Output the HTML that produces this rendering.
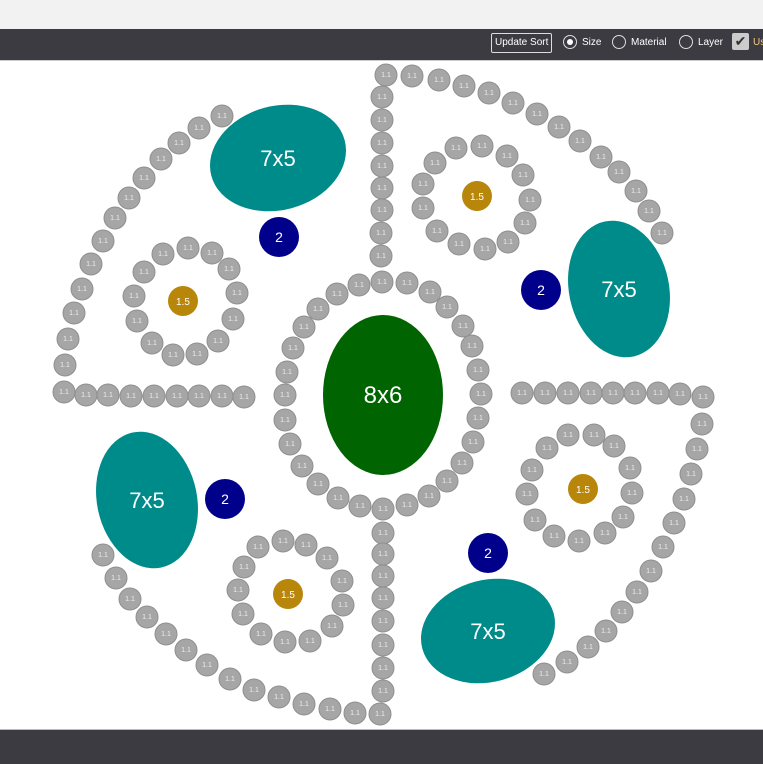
<!DOCTYPE html>
<html><head><meta charset="utf-8"><style>
body{margin:0;width:763px;height:763px;overflow:hidden;background:#fff;font-family:"Liberation Sans",sans-serif}
.top{position:absolute;left:0;top:0;width:763px;height:29px;background:#f2f2f2}
.bar{position:absolute;left:0;top:29px;width:763px;height:31px;background:#3c3b41;border-bottom:1px solid #ccc;color:#fff;font-size:10px}
.bot{position:absolute;left:0;top:729px;width:763px;height:34px;background:#3c3b41;border-top:1px solid #bbb}
.btn{position:absolute;left:491px;top:4px;height:18px;padding:0 3px;border:1px solid #ddd;border-radius:2px;line-height:18px;font-size:10px}
.rad{position:absolute;top:6px;width:12px;height:12px;border:1px solid #ddd;border-radius:50%}
.lb{position:absolute;top:8px;font-size:10px}
svg{position:absolute;left:0;top:0}
.s{fill:#a6a6a6;stroke:#8f8f8f;stroke-width:1}
.t{fill:#eee;font-size:7px;text-anchor:middle;font-family:"Liberation Sans",sans-serif}
</style></head><body>
<div class="top"></div>
<div class="bar">
<div class="btn">Update Sort</div>
<div class="rad" style="left:563px"><div style="position:absolute;left:3px;top:3px;width:6px;height:6px;border-radius:50%;background:#fff"></div></div><div class="lb" style="left:582px">Size</div>
<div class="rad" style="left:612px"></div><div class="lb" style="left:631px">Material</div>
<div class="rad" style="left:679px"></div><div class="lb" style="left:698px">Layer</div>
<div style="position:absolute;left:732px;top:4px;width:17px;height:17px;background:#ccc;border-radius:2px;color:#333;font-size:14px;line-height:17px;text-align:center">✔</div><div class="lb" style="left:753px;color:#f5c97a">Us</div>
</div>
<div class="bot"></div>
<svg width="763" height="763" viewBox="0 0 763 763" id="g">
<ellipse cx="278" cy="158" rx="69" ry="52" transform="rotate(-15 278 158)" fill="#008b8b"/>
<text x="278" y="166" fill="#fff" font-size="22" text-anchor="middle">7x5</text>
<ellipse cx="619" cy="289" rx="50" ry="69" transform="rotate(-12 619 289)" fill="#008b8b"/>
<text x="619" y="297" fill="#fff" font-size="22" text-anchor="middle">7x5</text>
<ellipse cx="147" cy="500" rx="50" ry="69" transform="rotate(-12 147 500)" fill="#008b8b"/>
<text x="147" y="508" fill="#fff" font-size="22" text-anchor="middle">7x5</text>
<ellipse cx="488" cy="631" rx="68" ry="51" transform="rotate(-15 488 631)" fill="#008b8b"/>
<text x="488" y="639" fill="#fff" font-size="22" text-anchor="middle">7x5</text>
<ellipse cx="383" cy="395" rx="60" ry="80" fill="#006400"/>
<text x="383" y="403" fill="#fff" font-size="24" text-anchor="middle">8x6</text>
<circle cx="279" cy="237" r="20" fill="#00008b"/><text x="279" y="242" fill="#fff" font-size="14" text-anchor="middle">2</text>
<circle cx="541" cy="290" r="20" fill="#00008b"/><text x="541" y="295" fill="#fff" font-size="14" text-anchor="middle">2</text>
<circle cx="225" cy="499" r="20" fill="#00008b"/><text x="225" y="504" fill="#fff" font-size="14" text-anchor="middle">2</text>
<circle cx="488" cy="553" r="20" fill="#00008b"/><text x="488" y="558" fill="#fff" font-size="14" text-anchor="middle">2</text>
<circle cx="183" cy="301" r="15" fill="#b8860b"/><text x="183" y="305" fill="#fff" font-size="10" text-anchor="middle">1.5</text>
<circle cx="477" cy="196" r="15" fill="#b8860b"/><text x="477" y="200" fill="#fff" font-size="10" text-anchor="middle">1.5</text>
<circle cx="288" cy="594" r="15" fill="#b8860b"/><text x="288" y="598" fill="#fff" font-size="10" text-anchor="middle">1.5</text>
<circle cx="583" cy="489" r="15" fill="#b8860b"/><text x="583" y="493" fill="#fff" font-size="10" text-anchor="middle">1.5</text>
<g>
<circle class="s" cx="222" cy="116" r="11"/><text class="t" x="222" y="118">1.1</text>
<circle class="s" cx="199" cy="128" r="11"/><text class="t" x="199" y="130">1.1</text>
<circle class="s" cx="179" cy="143" r="11"/><text class="t" x="179" y="145">1.1</text>
<circle class="s" cx="161" cy="159" r="11"/><text class="t" x="161" y="161">1.1</text>
<circle class="s" cx="144" cy="178" r="11"/><text class="t" x="144" y="180">1.1</text>
<circle class="s" cx="129" cy="198" r="11"/><text class="t" x="129" y="200">1.1</text>
<circle class="s" cx="115" cy="218" r="11"/><text class="t" x="115" y="220">1.1</text>
<circle class="s" cx="103" cy="241" r="11"/><text class="t" x="103" y="243">1.1</text>
<circle class="s" cx="91" cy="264" r="11"/><text class="t" x="91" y="266">1.1</text>
<circle class="s" cx="82" cy="289" r="11"/><text class="t" x="82" y="291">1.1</text>
<circle class="s" cx="74" cy="313" r="11"/><text class="t" x="74" y="315">1.1</text>
<circle class="s" cx="68" cy="339" r="11"/><text class="t" x="68" y="341">1.1</text>
<circle class="s" cx="65" cy="365" r="11"/><text class="t" x="65" y="367">1.1</text>
<circle class="s" cx="64" cy="392" r="11"/><text class="t" x="64" y="394">1.1</text>
<circle class="s" cx="86" cy="395" r="11"/><text class="t" x="86" y="397">1.1</text>
<circle class="s" cx="108" cy="395" r="11"/><text class="t" x="108" y="397">1.1</text>
<circle class="s" cx="131" cy="396" r="11"/><text class="t" x="131" y="398">1.1</text>
<circle class="s" cx="154" cy="396" r="11"/><text class="t" x="154" y="398">1.1</text>
<circle class="s" cx="177" cy="396" r="11"/><text class="t" x="177" y="398">1.1</text>
<circle class="s" cx="199" cy="396" r="11"/><text class="t" x="199" y="398">1.1</text>
<circle class="s" cx="222" cy="396" r="11"/><text class="t" x="222" y="398">1.1</text>
<circle class="s" cx="244" cy="397" r="11"/><text class="t" x="244" y="399">1.1</text>

<circle class="s" cx="163" cy="254" r="11"/><text class="t" x="163" y="256">1.1</text>
<circle class="s" cx="188" cy="248" r="11"/><text class="t" x="188" y="250">1.1</text>
<circle class="s" cx="212" cy="253" r="11"/><text class="t" x="212" y="255">1.1</text>
<circle class="s" cx="229" cy="269" r="11"/><text class="t" x="229" y="271">1.1</text>
<circle class="s" cx="237" cy="293" r="11"/><text class="t" x="237" y="295">1.1</text>
<circle class="s" cx="233" cy="319" r="11"/><text class="t" x="233" y="321">1.1</text>
<circle class="s" cx="218" cy="341" r="11"/><text class="t" x="218" y="343">1.1</text>
<circle class="s" cx="197" cy="354" r="11"/><text class="t" x="197" y="356">1.1</text>
<circle class="s" cx="173" cy="355" r="11"/><text class="t" x="173" y="357">1.1</text>
<circle class="s" cx="152" cy="343" r="11"/><text class="t" x="152" y="345">1.1</text>
<circle class="s" cx="137" cy="321" r="11"/><text class="t" x="137" y="323">1.1</text>
<circle class="s" cx="134" cy="296" r="11"/><text class="t" x="134" y="298">1.1</text>
<circle class="s" cx="144" cy="272" r="11"/><text class="t" x="144" y="274">1.1</text>

<circle class="s" cx="386" cy="75" r="11"/><text class="t" x="386" y="77">1.1</text>
<circle class="s" cx="382" cy="97" r="11"/><text class="t" x="382" y="99">1.1</text>
<circle class="s" cx="382" cy="120" r="11"/><text class="t" x="382" y="122">1.1</text>
<circle class="s" cx="382" cy="143" r="11"/><text class="t" x="382" y="145">1.1</text>
<circle class="s" cx="382" cy="166" r="11"/><text class="t" x="382" y="168">1.1</text>
<circle class="s" cx="382" cy="188" r="11"/><text class="t" x="382" y="190">1.1</text>
<circle class="s" cx="382" cy="210" r="11"/><text class="t" x="382" y="212">1.1</text>
<circle class="s" cx="381" cy="233" r="11"/><text class="t" x="381" y="235">1.1</text>
<circle class="s" cx="381" cy="256" r="11"/><text class="t" x="381" y="258">1.1</text>
<circle class="s" cx="412" cy="76" r="11"/><text class="t" x="412" y="78">1.1</text>
<circle class="s" cx="439" cy="80" r="11"/><text class="t" x="439" y="82">1.1</text>
<circle class="s" cx="464" cy="86" r="11"/><text class="t" x="464" y="88">1.1</text>
<circle class="s" cx="489" cy="93" r="11"/><text class="t" x="489" y="95">1.1</text>
<circle class="s" cx="513" cy="103" r="11"/><text class="t" x="513" y="105">1.1</text>
<circle class="s" cx="537" cy="114" r="11"/><text class="t" x="537" y="116">1.1</text>
<circle class="s" cx="559" cy="127" r="11"/><text class="t" x="559" y="129">1.1</text>
<circle class="s" cx="580" cy="141" r="11"/><text class="t" x="580" y="143">1.1</text>
<circle class="s" cx="601" cy="157" r="11"/><text class="t" x="601" y="159">1.1</text>
<circle class="s" cx="619" cy="172" r="11"/><text class="t" x="619" y="174">1.1</text>
<circle class="s" cx="636" cy="191" r="11"/><text class="t" x="636" y="193">1.1</text>
<circle class="s" cx="649" cy="211" r="11"/><text class="t" x="649" y="213">1.1</text>
<circle class="s" cx="662" cy="233" r="11"/><text class="t" x="662" y="235">1.1</text>

<circle class="s" cx="456" cy="148" r="11"/><text class="t" x="456" y="150">1.1</text>
<circle class="s" cx="482" cy="146" r="11"/><text class="t" x="482" y="148">1.1</text>
<circle class="s" cx="507" cy="156" r="11"/><text class="t" x="507" y="158">1.1</text>
<circle class="s" cx="523" cy="175" r="11"/><text class="t" x="523" y="177">1.1</text>
<circle class="s" cx="530" cy="200" r="11"/><text class="t" x="530" y="202">1.1</text>
<circle class="s" cx="525" cy="223" r="11"/><text class="t" x="525" y="225">1.1</text>
<circle class="s" cx="508" cy="242" r="11"/><text class="t" x="508" y="244">1.1</text>
<circle class="s" cx="485" cy="249" r="11"/><text class="t" x="485" y="251">1.1</text>
<circle class="s" cx="459" cy="244" r="11"/><text class="t" x="459" y="246">1.1</text>
<circle class="s" cx="437" cy="231" r="11"/><text class="t" x="437" y="233">1.1</text>
<circle class="s" cx="423" cy="208" r="11"/><text class="t" x="423" y="210">1.1</text>
<circle class="s" cx="423" cy="184" r="11"/><text class="t" x="423" y="186">1.1</text>
<circle class="s" cx="435" cy="163" r="11"/><text class="t" x="435" y="165">1.1</text>

<circle class="s" cx="382" cy="282" r="11"/><text class="t" x="382" y="284">1.1</text>
<circle class="s" cx="407" cy="283" r="11"/><text class="t" x="407" y="285">1.1</text>
<circle class="s" cx="430" cy="292" r="11"/><text class="t" x="430" y="294">1.1</text>
<circle class="s" cx="447" cy="307" r="11"/><text class="t" x="447" y="309">1.1</text>
<circle class="s" cx="463" cy="326" r="11"/><text class="t" x="463" y="328">1.1</text>
<circle class="s" cx="472" cy="346" r="11"/><text class="t" x="472" y="348">1.1</text>
<circle class="s" cx="478" cy="370" r="11"/><text class="t" x="478" y="372">1.1</text>
<circle class="s" cx="481" cy="394" r="11"/><text class="t" x="481" y="396">1.1</text>
<circle class="s" cx="478" cy="418" r="11"/><text class="t" x="478" y="420">1.1</text>
<circle class="s" cx="473" cy="442" r="11"/><text class="t" x="473" y="444">1.1</text>
<circle class="s" cx="462" cy="463" r="11"/><text class="t" x="462" y="465">1.1</text>
<circle class="s" cx="447" cy="481" r="11"/><text class="t" x="447" y="483">1.1</text>
<circle class="s" cx="429" cy="496" r="11"/><text class="t" x="429" y="498">1.1</text>
<circle class="s" cx="407" cy="505" r="11"/><text class="t" x="407" y="507">1.1</text>
<circle class="s" cx="383" cy="509" r="11"/><text class="t" x="383" y="511">1.1</text>
<circle class="s" cx="360" cy="506" r="11"/><text class="t" x="360" y="508">1.1</text>
<circle class="s" cx="338" cy="498" r="11"/><text class="t" x="338" y="500">1.1</text>
<circle class="s" cx="318" cy="484" r="11"/><text class="t" x="318" y="486">1.1</text>
<circle class="s" cx="302" cy="466" r="11"/><text class="t" x="302" y="468">1.1</text>
<circle class="s" cx="290" cy="444" r="11"/><text class="t" x="290" y="446">1.1</text>
<circle class="s" cx="285" cy="420" r="11"/><text class="t" x="285" y="422">1.1</text>
<circle class="s" cx="285" cy="395" r="11"/><text class="t" x="285" y="397">1.1</text>
<circle class="s" cx="287" cy="372" r="11"/><text class="t" x="287" y="374">1.1</text>
<circle class="s" cx="293" cy="348" r="11"/><text class="t" x="293" y="350">1.1</text>
<circle class="s" cx="304" cy="327" r="11"/><text class="t" x="304" y="329">1.1</text>
<circle class="s" cx="318" cy="309" r="11"/><text class="t" x="318" y="311">1.1</text>
<circle class="s" cx="337" cy="294" r="11"/><text class="t" x="337" y="296">1.1</text>
<circle class="s" cx="359" cy="285" r="11"/><text class="t" x="359" y="287">1.1</text>

<circle class="s" cx="383" cy="533" r="11"/><text class="t" x="383" y="535">1.1</text>
<circle class="s" cx="383" cy="554" r="11"/><text class="t" x="383" y="556">1.1</text>
<circle class="s" cx="383" cy="576" r="11"/><text class="t" x="383" y="578">1.1</text>
<circle class="s" cx="383" cy="598" r="11"/><text class="t" x="383" y="600">1.1</text>
<circle class="s" cx="383" cy="621" r="11"/><text class="t" x="383" y="623">1.1</text>
<circle class="s" cx="383" cy="645" r="11"/><text class="t" x="383" y="647">1.1</text>
<circle class="s" cx="383" cy="668" r="11"/><text class="t" x="383" y="670">1.1</text>
<circle class="s" cx="383" cy="691" r="11"/><text class="t" x="383" y="693">1.1</text>
<circle class="s" cx="380" cy="714" r="11"/><text class="t" x="380" y="716">1.1</text>
<circle class="s" cx="355" cy="713" r="11"/><text class="t" x="355" y="715">1.1</text>
<circle class="s" cx="330" cy="709" r="11"/><text class="t" x="330" y="711">1.1</text>
<circle class="s" cx="304" cy="704" r="11"/><text class="t" x="304" y="706">1.1</text>
<circle class="s" cx="279" cy="697" r="11"/><text class="t" x="279" y="699">1.1</text>
<circle class="s" cx="254" cy="690" r="11"/><text class="t" x="254" y="692">1.1</text>
<circle class="s" cx="230" cy="679" r="11"/><text class="t" x="230" y="681">1.1</text>
<circle class="s" cx="207" cy="665" r="11"/><text class="t" x="207" y="667">1.1</text>
<circle class="s" cx="186" cy="650" r="11"/><text class="t" x="186" y="652">1.1</text>
<circle class="s" cx="166" cy="634" r="11"/><text class="t" x="166" y="636">1.1</text>
<circle class="s" cx="147" cy="617" r="11"/><text class="t" x="147" y="619">1.1</text>
<circle class="s" cx="130" cy="599" r="11"/><text class="t" x="130" y="601">1.1</text>
<circle class="s" cx="116" cy="578" r="11"/><text class="t" x="116" y="580">1.1</text>
<circle class="s" cx="103" cy="555" r="11"/><text class="t" x="103" y="557">1.1</text>

<circle class="s" cx="258" cy="547" r="11"/><text class="t" x="258" y="549">1.1</text>
<circle class="s" cx="283" cy="541" r="11"/><text class="t" x="283" y="543">1.1</text>
<circle class="s" cx="306" cy="545" r="11"/><text class="t" x="306" y="547">1.1</text>
<circle class="s" cx="327" cy="558" r="11"/><text class="t" x="327" y="560">1.1</text>
<circle class="s" cx="342" cy="581" r="11"/><text class="t" x="342" y="583">1.1</text>
<circle class="s" cx="343" cy="605" r="11"/><text class="t" x="343" y="607">1.1</text>
<circle class="s" cx="332" cy="626" r="11"/><text class="t" x="332" y="628">1.1</text>
<circle class="s" cx="310" cy="641" r="11"/><text class="t" x="310" y="643">1.1</text>
<circle class="s" cx="285" cy="642" r="11"/><text class="t" x="285" y="644">1.1</text>
<circle class="s" cx="261" cy="634" r="11"/><text class="t" x="261" y="636">1.1</text>
<circle class="s" cx="243" cy="614" r="11"/><text class="t" x="243" y="616">1.1</text>
<circle class="s" cx="238" cy="590" r="11"/><text class="t" x="238" y="592">1.1</text>
<circle class="s" cx="244" cy="567" r="11"/><text class="t" x="244" y="569">1.1</text>

<circle class="s" cx="522" cy="393" r="11"/><text class="t" x="522" y="395">1.1</text>
<circle class="s" cx="545" cy="393" r="11"/><text class="t" x="545" y="395">1.1</text>
<circle class="s" cx="568" cy="393" r="11"/><text class="t" x="568" y="395">1.1</text>
<circle class="s" cx="591" cy="393" r="11"/><text class="t" x="591" y="395">1.1</text>
<circle class="s" cx="613" cy="393" r="11"/><text class="t" x="613" y="395">1.1</text>
<circle class="s" cx="635" cy="393" r="11"/><text class="t" x="635" y="395">1.1</text>
<circle class="s" cx="658" cy="393" r="11"/><text class="t" x="658" y="395">1.1</text>
<circle class="s" cx="680" cy="394" r="11"/><text class="t" x="680" y="396">1.1</text>
<circle class="s" cx="703" cy="397" r="11"/><text class="t" x="703" y="399">1.1</text>
<circle class="s" cx="702" cy="424" r="11"/><text class="t" x="702" y="426">1.1</text>
<circle class="s" cx="697" cy="449" r="11"/><text class="t" x="697" y="451">1.1</text>
<circle class="s" cx="691" cy="474" r="11"/><text class="t" x="691" y="476">1.1</text>
<circle class="s" cx="684" cy="499" r="11"/><text class="t" x="684" y="501">1.1</text>
<circle class="s" cx="674" cy="523" r="11"/><text class="t" x="674" y="525">1.1</text>
<circle class="s" cx="663" cy="547" r="11"/><text class="t" x="663" y="549">1.1</text>
<circle class="s" cx="651" cy="571" r="11"/><text class="t" x="651" y="573">1.1</text>
<circle class="s" cx="637" cy="592" r="11"/><text class="t" x="637" y="594">1.1</text>
<circle class="s" cx="622" cy="612" r="11"/><text class="t" x="622" y="614">1.1</text>
<circle class="s" cx="606" cy="631" r="11"/><text class="t" x="606" y="633">1.1</text>
<circle class="s" cx="588" cy="647" r="11"/><text class="t" x="588" y="649">1.1</text>
<circle class="s" cx="567" cy="662" r="11"/><text class="t" x="567" y="664">1.1</text>
<circle class="s" cx="544" cy="674" r="11"/><text class="t" x="544" y="676">1.1</text>

<circle class="s" cx="568" cy="435" r="11"/><text class="t" x="568" y="437">1.1</text>
<circle class="s" cx="594" cy="435" r="11"/><text class="t" x="594" y="437">1.1</text>
<circle class="s" cx="614" cy="446" r="11"/><text class="t" x="614" y="448">1.1</text>
<circle class="s" cx="630" cy="468" r="11"/><text class="t" x="630" y="470">1.1</text>
<circle class="s" cx="632" cy="493" r="11"/><text class="t" x="632" y="495">1.1</text>
<circle class="s" cx="623" cy="517" r="11"/><text class="t" x="623" y="519">1.1</text>
<circle class="s" cx="605" cy="533" r="11"/><text class="t" x="605" y="535">1.1</text>
<circle class="s" cx="579" cy="541" r="11"/><text class="t" x="579" y="543">1.1</text>
<circle class="s" cx="554" cy="536" r="11"/><text class="t" x="554" y="538">1.1</text>
<circle class="s" cx="535" cy="520" r="11"/><text class="t" x="535" y="522">1.1</text>
<circle class="s" cx="527" cy="494" r="11"/><text class="t" x="527" y="496">1.1</text>
<circle class="s" cx="532" cy="470" r="11"/><text class="t" x="532" y="472">1.1</text>
<circle class="s" cx="547" cy="448" r="11"/><text class="t" x="547" y="450">1.1</text>
</g>
</svg>
</body></html>
